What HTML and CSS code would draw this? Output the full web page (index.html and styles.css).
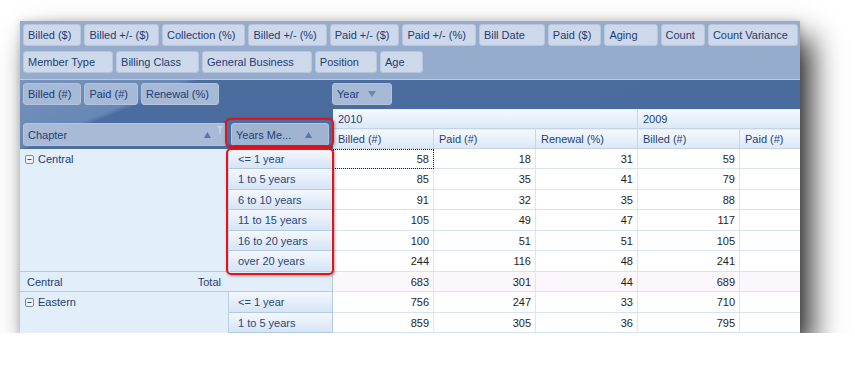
FILE: index.html
```html
<!DOCTYPE html>
<html>
<head>
<meta charset="utf-8">
<link rel="stylesheet" href="styles.css">
</head>
<body>
<div class="frame">
  <div class="filter-area">
    <div class="chip-row">
      <div class="chip">Billed ($)</div>
      <div class="chip">Billed +/- ($)</div>
      <div class="chip">Collection (%)</div>
      <div class="chip">Billed +/- (%)</div>
      <div class="chip">Paid +/- ($)</div>
      <div class="chip">Paid +/- (%)</div>
      <div class="chip wide">Bill Date</div>
      <div class="chip">Paid ($)</div>
      <div class="chip wide">Aging</div>
      <div class="chip">Count</div>
      <div class="chip">Count Variance</div>
    </div>
    <div class="chip-row second">
      <div class="chip">Member Type</div>
      <div class="chip">Billing Class</div>
      <div class="chip">General Business</div>
      <div class="chip">Position</div>
      <div class="chip">Age</div>
    </div>
  </div>
  <div class="pivot">
    <div class="corner">
      <div class="chip-row data-fields">
        <div class="chip">Billed (#)</div>
        <div class="chip">Paid (#)</div>
        <div class="chip">Renewal (%)</div>
      </div>
      <div class="row-heads">
        <div class="head-btn chapter">
          <span class="head-label">Chapter</span>
          <svg class="sort" width="7" height="6" viewBox="0 0 7 6"><path d="M3.5 0L7 6H0z"/></svg>
          <svg class="funnel" width="6" height="8" viewBox="0 0 6 8"><path d="M0 0H6L3.8 3V7L2.2 8V3z"/></svg>
        </div>
        <div class="head-btn years">
          <span class="head-label">Years Me...</span>
          <svg class="sort" width="7" height="6" viewBox="0 0 7 6"><path d="M3.5 0L7 6H0z"/></svg>
        </div>
      </div>
    </div>
    <div class="col-area">
      <div class="chip year">Year<svg class="down" width="8" height="6" viewBox="0 0 8 6"><path d="M0 0H8L4 6z"/></svg></div>
    </div>
    <div class="hdr y2010">2010</div>
    <div class="hdr y2009">2009</div>
    <div class="hdr">Billed (#)</div>
    <div class="hdr">Paid (#)</div>
    <div class="hdr">Renewal (%)</div>
    <div class="hdr">Billed (#)</div>
    <div class="hdr">Paid (#)</div>

    <div class="chap span6"><svg class="collapse" width="9" height="9" viewBox="0 0 9 9"><rect x="0.5" y="0.5" width="8" height="8" rx="1.5"/><path d="M2.5 4.5H6.5"/></svg>Central</div>
    <div class="yr">&lt;= 1 year</div><div class="c focus">58</div><div class="c">18</div><div class="c">31</div><div class="c">59</div><div class="c"></div>
    <div class="yr">1 to 5 years</div><div class="c">85</div><div class="c">35</div><div class="c">41</div><div class="c">79</div><div class="c"></div>
    <div class="yr">6 to 10 years</div><div class="c">91</div><div class="c">32</div><div class="c">35</div><div class="c">88</div><div class="c"></div>
    <div class="yr">11 to 15 years</div><div class="c">105</div><div class="c">49</div><div class="c">47</div><div class="c">117</div><div class="c"></div>
    <div class="yr">16 to 20 years</div><div class="c">100</div><div class="c">51</div><div class="c">51</div><div class="c">105</div><div class="c"></div>
    <div class="yr">over 20 years</div><div class="c">244</div><div class="c">116</div><div class="c">48</div><div class="c">241</div><div class="c"></div>
    <div class="tot"><span>Central</span><span>Total</span></div><div class="c t">683</div><div class="c t">301</div><div class="c t">44</div><div class="c t">689</div><div class="c t"></div>
    <div class="chap span3"><svg class="collapse" width="9" height="9" viewBox="0 0 9 9"><rect x="0.5" y="0.5" width="8" height="8" rx="1.5"/><path d="M2.5 4.5H6.5"/></svg>Eastern</div>
    <div class="yr">&lt;= 1 year</div><div class="c">756</div><div class="c">247</div><div class="c">33</div><div class="c">710</div><div class="c"></div>
    <div class="yr">1 to 5 years</div><div class="c">859</div><div class="c">305</div><div class="c">36</div><div class="c">795</div><div class="c"></div>
  </div>
  <div class="mark mark-head"></div>
  <div class="mark mark-cells"></div>
</div>
</body>
</html>
```

FILE: styles.css
```css
* { box-sizing: border-box; }

body {
  margin: 0;
  padding: 21px 0 0 20px;
  background: #ffffff;
  font-family: "Liberation Sans", Arial, sans-serif;
  font-size: 11px;
}

.frame {
  position: relative;
  width: 780px;
  height: 312px;
  overflow: hidden;
  background: #4a6b9d;
  box-shadow: 12px 17px 28px rgba(0, 0, 0, 0.82), 0 0 7px rgba(0, 0, 0, 0.16);
}

.filter-area {
  height: 59px;
  background: #96accd;
  border-bottom: 1px solid #bccade;
  padding: 3px 0 0 3px;
  display: flex;
  flex-direction: column;
  gap: 5px;
}

.chip-row {
  display: flex;
  gap: 3px;
}

.chip {
  flex: none;
  height: 22px;
  line-height: 21px;
  border: 1px solid #b7c6dc;
  border-radius: 3px;
  background: #cdd9ea;
  color: #1d3c73;
  padding: 0 9px 0 4px;
  white-space: nowrap;
}

.chip.wide { padding-right: 19px; }
.chip-row.second .chip { padding-right: 17px; }

.pivot {
  height: 253px;
  display: grid;
  grid-template-columns: 209px 104px 101px 102px 102px 102px 102px;
  grid-template-rows: 29px 20px 20px;
  grid-auto-rows: 20.45px;
  background: linear-gradient(158deg, #7893bd 0px, #6787b4 62px, #5677a9 65px, #4b6c9f 67px, #4a6b9d 100%);
}

.corner {
  grid-column: 1 / 3;
  grid-row: 1 / 4;
  display: flex;
  flex-direction: column;
  justify-content: space-between;
  padding: 3px 0 3px 3px;
}

.data-fields .chip {
  background: #a6b9d6;
  border-color: #b3c3db;
}

.row-heads {
  display: flex;
  gap: 4px;
}

.head-btn {
  height: 23px;
  border: 1px solid #b5c5dc;
  border-radius: 3px;
  display: flex;
  align-items: center;
  color: #23427a;
  padding-left: 4px;
  padding-top: 1px;
}

.head-btn.chapter {
  width: 204px;
  background: #a8bad6;
  padding-right: 3px;
}

.head-btn.years {
  width: 98px;
  background: #a0b4d1;
  padding-right: 16px;
}

.head-label { flex: 1; white-space: nowrap; }

.sort { fill: #5677aa; flex: none; }

.funnel {
  fill: #c6d2e3;
  flex: none;
  align-self: flex-start;
  margin: 1px 0 0 6px;
}

.col-area {
  grid-column: 3 / 8;
  grid-row: 1;
  padding-top: 3px;
  margin-left: -1px;
}

.chip.year {
  display: inline-flex;
  align-items: center;
  width: 60px;
  background: #a6b9d6;
  border-color: #b3c3db;
}

.down {
  fill: #6a86b1;
  margin-left: 9px;
}

.hdr {
  background: linear-gradient(#f5f9fe, #dce8f7);
  border-right: 1px solid #c6d6eb;
  border-bottom: 1px solid #c2d3ea;
  border-top: 1px solid #e6eef9;
  color: #1f3f77;
  padding-left: 5px;
  line-height: 19px;
  white-space: nowrap;
}

.y2010 { grid-column: 3 / 6; grid-row: 2; }
.y2009 { grid-column: 6 / 8; grid-row: 2; }

.chap {
  grid-column: 1;
  background: #e3eefb;
  border-right: 1px solid #bacee6;
  border-bottom: 1px solid #b5cae4;
  color: #213f74;
  padding-left: 5px;
  line-height: 21px;
  display: flex;
  align-items: flex-start;
}

.chap.span6 { grid-row: span 6; }
.chap.span3 { grid-row: span 3; }

.collapse {
  flex: none;
  margin: 6px 4px 0 0;
}

.collapse rect {
  fill: #eef1f5;
  stroke: #7d8ca3;
}

.collapse path {
  stroke: #3f4f68;
  stroke-width: 1;
}

.yr {
  grid-column: 2;
  background: linear-gradient(#f4f8fe, #d6e4f5);
  border-right: 1px solid #b4c9e3;
  border-bottom: 1px solid #b4c9e3;
  color: #29487c;
  padding-left: 9px;
  line-height: 21px;
  white-space: nowrap;
}

.c {
  background: #ffffff;
  border-right: 1px solid #dae6f4;
  border-bottom: 1px solid #d6e3f3;
  color: #1e1e1e;
  text-align: right;
  padding-right: 4px;
  line-height: 21px;
}

.c.t { background: #fbf7fd; }

.c.focus {
  outline: 1px dotted #222;
  outline-offset: -1px;
}

.tot {
  grid-column: 1 / 3;
  background: #e2edfa;
  border-right: 1px solid #b4c9e3;
  border-bottom: 1px solid #b6cbe5;
  color: #213f74;
  display: flex;
  justify-content: space-between;
  padding: 0 111px 0 7px;
  line-height: 21px;
}

.mark {
  position: absolute;
  border: 2px solid #e1131b;
  border-radius: 5px;
  box-shadow: 1px 1px 3px rgba(0, 0, 0, 0.35);
}

.mark-head {
  left: 205px;
  top: 97px;
  width: 109px;
  height: 29px;
}

.mark-cells {
  left: 206px;
  top: 127px;
  width: 108px;
  height: 127px;
}
```
